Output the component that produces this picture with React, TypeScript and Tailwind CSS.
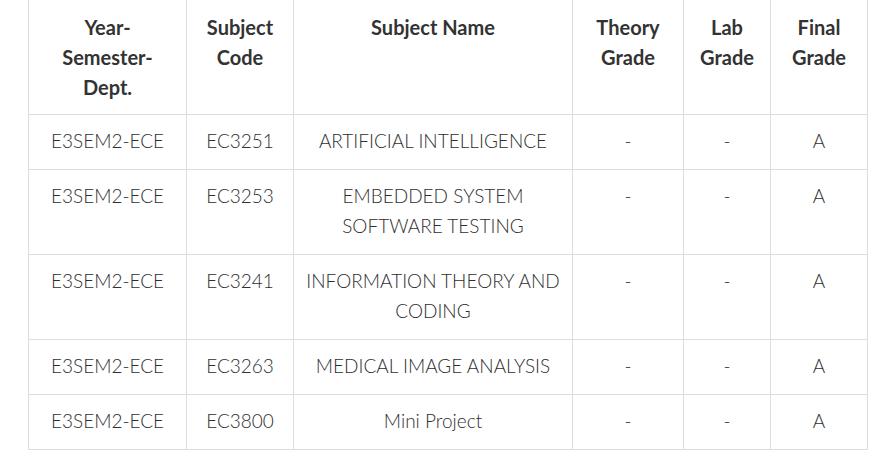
const rows = [
    { code: 'EC3251', name: ['ARTIFICIAL INTELLIGENCE'] },
    { code: 'EC3253', name: ['EMBEDDED SYSTEM', 'SOFTWARE TESTING'] },
    { code: 'EC3241', name: ['INFORMATION THEORY AND', 'CODING'] },
    { code: 'EC3263', name: ['MEDICAL IMAGE ANALYSIS'] },
    { code: 'EC3800', name: ['Mini Project'] },
];

const th = 'border border-[#dddddd] px-3 pt-3 pb-3 align-top text-center font-bold text-[20px] text-[#333333]';
const td = 'border border-[#dddddd] px-3 pt-[11px] pb-[13px] align-top text-center font-light text-[19px] text-[#2e2e2e]';

export default function App() {
    return (
        <div className="bg-white w-[875px] h-[456px] overflow-hidden">
            <div className="pl-[28px] -mt-px">
                <table
                    className="table-fixed border-collapse w-[839px] leading-[30px]"
                    style={{ fontFamily: 'Lato, "Open Sans", sans-serif' }}
                >
                    <colgroup>
                        <col className="w-[158px]" />
                        <col className="w-[107px]" />
                        <col className="w-[279px]" />
                        <col className="w-[111px]" />
                        <col className="w-[87px]" />
                        <col className="w-[97px]" />
                    </colgroup>
                    <thead>
                        <tr>
                            <th className={th}>Year-<br />Semester-<br />Dept.</th>
                            <th className={th}>Subject<br />Code</th>
                            <th className={th}>Subject Name</th>
                            <th className={th}>Theory<br />Grade</th>
                            <th className={th}>Lab<br />Grade</th>
                            <th className={th}>Final<br />Grade</th>
                        </tr>
                    </thead>
                    <tbody>
                        {rows.map((r) => (
                            <tr key={r.code}>
                                <td className={td}>E3SEM2-ECE</td>
                                <td className={td}>{r.code}</td>
                                <td className={td}>
                                    {r.name.map((n, i) => (
                                        <span key={i}>
                                            {i > 0 && <br />}
                                            {n}
                                        </span>
                                    ))}
                                </td>
                                <td className={td}>-</td>
                                <td className={td}>-</td>
                                <td className={td}>A</td>
                            </tr>
                        ))}
                    </tbody>
                </table>
            </div>
        </div>
    );
}
